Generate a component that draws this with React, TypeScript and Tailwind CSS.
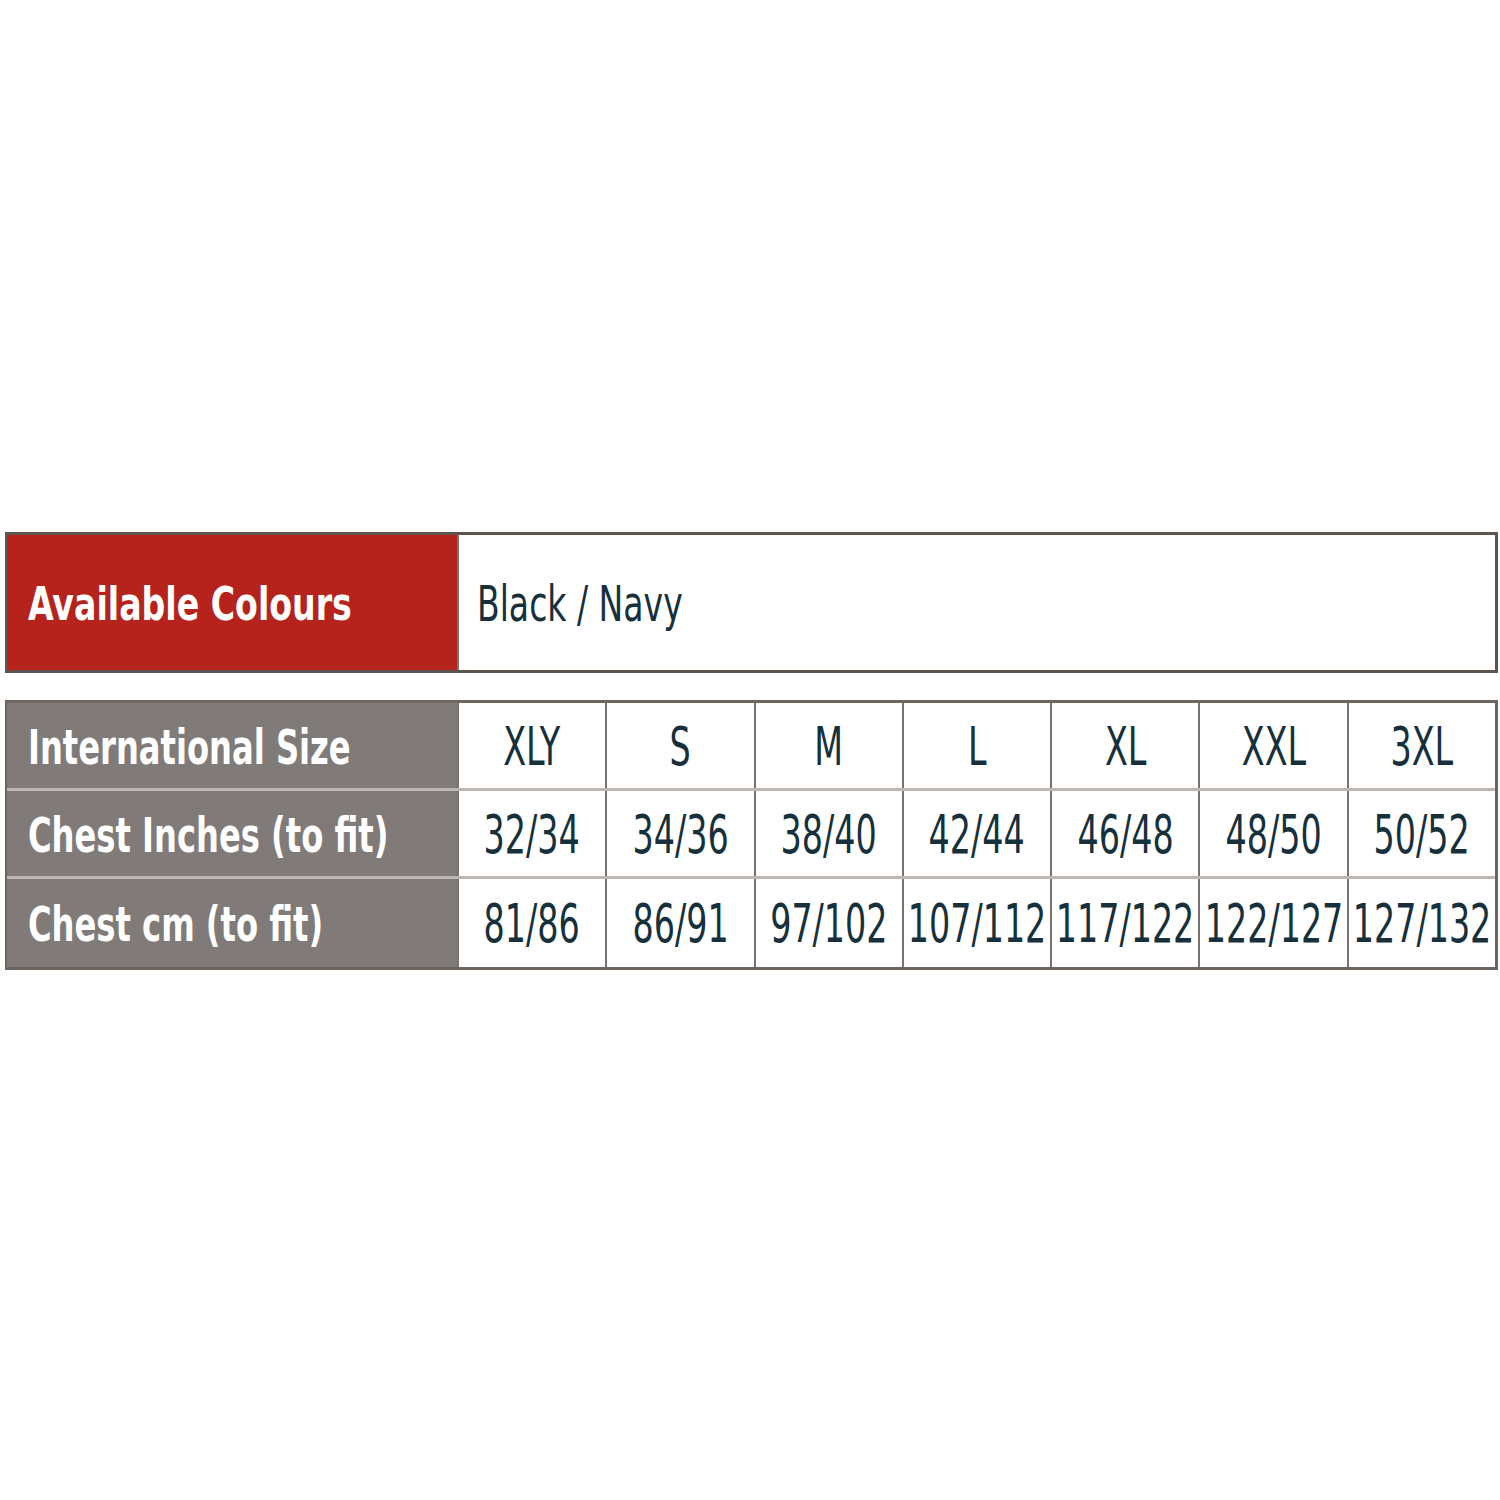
import React from "react";

const sizes = ["XLY", "S", "M", "L", "XL", "XXL", "3XL"];
const inches = ["32/34", "34/36", "38/40", "42/44", "46/48", "48/50", "50/52"];
const cms = ["81/86", "86/91", "97/102", "107/112", "117/122", "122/127", "127/132"];

const font = { fontFamily: '"DejaVu Sans Condensed", "DejaVu Sans", "Liberation Sans", sans-serif' };

function Row({ label, values, last }: { label: string; values: string[]; last?: boolean }) {
  return (
    <div className={`grid grid-cols-[450px_repeat(7,minmax(0,1fr))] h-[88px] ${last ? "" : "border-b-[3px] border-[#bdb7b4]"}`}>
      <div className="bg-[#807b79] flex items-center pl-[21px] pt-[2px] overflow-hidden">
        <span className="whitespace-nowrap text-white font-bold text-[48px] scale-x-[0.745] origin-left inline-block">
          {label}
        </span>
      </div>
      {values.map((v, i) => (
        <div
          key={i}
          className="flex items-center justify-center bg-white border-l-2 border-[#7c726d] pt-[2px] overflow-visible"
        >
          <span className="whitespace-nowrap text-[#16303c] text-[53px] scale-x-[0.7] inline-block">{v}</span>
        </div>
      ))}
    </div>
  );
}

export default function App() {
  return (
    <div className="w-[1500px] h-[1500px] bg-white pt-[532px] pl-[5px] pr-[2px]" style={font}>
      <div className="flex h-[141px] border-[3px] border-[#5f5550] border-l-[2px]">
        <div className="w-[450px] shrink-0 bg-[#b5231c] flex items-center pl-[21px] pt-[4px]">
          <span className="whitespace-nowrap text-white font-bold text-[47px] scale-x-[0.785] origin-left inline-block">
            Available Colours
          </span>
        </div>
        <div className="flex-1 bg-white border-l-2 border-[#7c726d] flex items-center pl-[18px] pt-[4px]">
          <span className="whitespace-nowrap text-[#16303c] text-[49px] scale-x-[0.75] origin-left inline-block">
            Black / Navy
          </span>
        </div>
      </div>
      <div className="mt-[27px] border-[3px] border-[#6e6560] border-l-[2px] flex flex-col">
        <Row label="International Size" values={sizes} />
        <Row label="Chest Inches (to fit)" values={inches} />
        <Row label="Chest cm (to fit)" values={cms} last />
      </div>
    </div>
  );
}
